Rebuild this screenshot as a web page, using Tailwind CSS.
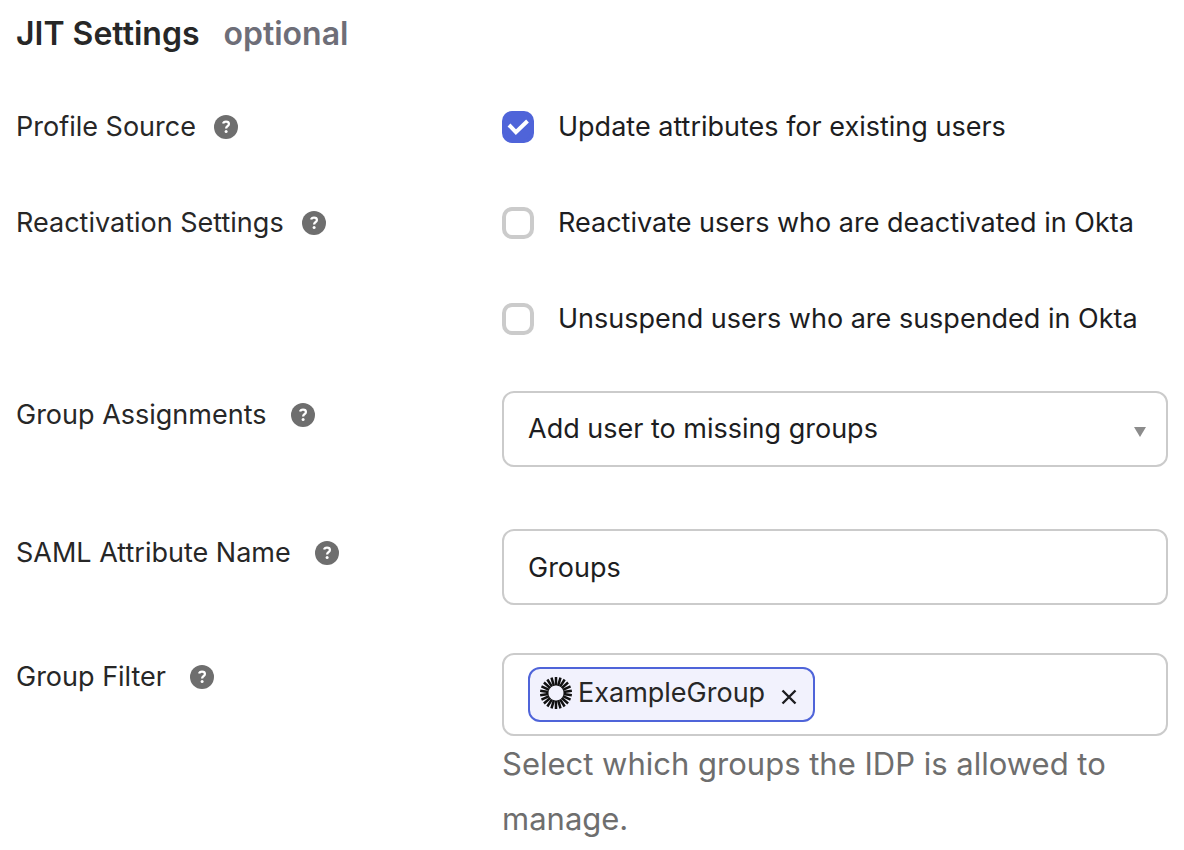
<!DOCTYPE html>
<html lang="en">
<head>
<meta charset="utf-8">
<meta name="viewport" content="width=device-width, initial-scale=1">
<title>JIT Settings</title>
<script src="https://cdn.jsdelivr.net/npm/@tailwindcss/browser@4"></script>
</head>
<body class="bg-white font-['Inter',sans-serif] text-[27px] leading-10 text-[#1d1d21]">
<svg class="hidden" aria-hidden="true">
  <symbol id="help" viewBox="0 0 24 24">
    <circle cx="12" cy="12" r="12" fill="#6e6e6e"/>
    <path d="M9.1 8.600C9.400 7.200 10.500 6.600 12 6.600c1.800 0 2.900.9 2.900 2.300 0 1.100-.6 1.700-1.500 2.300-.9.6-1.300 1-1.300 2.200" fill="none" stroke="#fff" stroke-width="2.300"/>
    <circle cx="12.100" cy="16.600" r="1.500" fill="#fff"/>
  </symbol>
</svg>
<form class="px-4 pt-3">
  <h1 class="flex gap-6 text-[32px] leading-11 font-semibold text-[#272727]">JIT Settings <span class="text-[#6e6e78]">optional</span></h1>

  <div class="mt-[51px] grid grid-cols-[27fr_37fr]">
    <div class="flex h-10 items-center gap-[18px] text-[#272727]">Profile Source
      <button type="button" aria-label="Help: Profile Source"><svg class="size-6"><use href="#help"/></svg></button>
    </div>
    <label class="flex h-10 items-center gap-6">
      <span class="relative size-8 shrink-0">
        <input type="checkbox" checked class="peer block size-8 appearance-none rounded-[10px] border-4 border-[#cbcbcb] bg-white checked:border-[#4f64d9] checked:bg-[#4f64d9]">
        <svg class="pointer-events-none absolute inset-0 hidden size-8 peer-checked:block" viewBox="0 0 32 32" fill="none" stroke="#fff" stroke-width="4"><path d="M7 14l6.900 7.100L25.500 10"/></svg>
      </span>
      Update attributes for existing users
    </label>
  </div>

  <div class="mt-14 grid grid-cols-[27fr_37fr]">
    <div class="flex h-10 items-center gap-[18px] text-[#272727]">Reactivation Settings
      <button type="button" aria-label="Help: Reactivation Settings"><svg class="size-6"><use href="#help"/></svg></button>
    </div>
    <div class="flex flex-col gap-14">
      <label class="flex h-10 items-center gap-6">
        <input type="checkbox" class="size-8 shrink-0 appearance-none rounded-[10px] border-4 border-[#cbcbcb] bg-white checked:border-[#4f64d9] checked:bg-[#4f64d9]">
        Reactivate users who are deactivated in Okta
      </label>
      <label class="flex h-10 items-center gap-6">
        <input type="checkbox" class="size-8 shrink-0 appearance-none rounded-[10px] border-4 border-[#cbcbcb] bg-white checked:border-[#4f64d9] checked:bg-[#4f64d9]">
        Unsuspend users who are suspended in Okta
      </label>
    </div>
  </div>

  <div class="mt-[52px] grid grid-cols-[27fr_37fr]">
    <div class="mt-1 flex h-10 items-center gap-6 text-[#272727]"><label for="assign">Group Assignments</label>
      <button type="button" aria-label="Help: Group Assignments"><svg class="size-6"><use href="#help"/></svg></button>
    </div>
    <div class="relative">
      <select id="assign" class="block h-[76px] w-full appearance-none rounded-xl border-2 border-[#cbcbcb] bg-white px-6">
        <option>Add user to missing groups</option>
      </select>
      <svg class="pointer-events-none absolute top-9 right-[22px] h-[10px] w-3" viewBox="0 0 12 10"><path d="M0 0h12L6 10z" fill="#8c8c8c"/></svg>
    </div>
  </div>

  <div class="mt-[62px] grid grid-cols-[27fr_37fr]">
    <div class="mt-1 flex h-10 items-center gap-6 text-[#272727]"><label for="attr">SAML Attribute Name</label>
      <button type="button" aria-label="Help: SAML Attribute Name"><svg class="size-6"><use href="#help"/></svg></button>
    </div>
    <input id="attr" type="text" value="Groups" class="h-[76px] w-full rounded-xl border-2 border-[#cbcbcb] bg-white px-6">
  </div>

  <div class="mt-12 grid grid-cols-[27fr_37fr]">
    <div class="mt-1 flex h-10 items-center gap-6 text-[#272727]"><span id="filter">Group Filter</span>
      <button type="button" aria-label="Help: Group Filter"><svg class="size-6"><use href="#help"/></svg></button>
    </div>
    <div>
      <div role="group" aria-labelledby="filter" class="flex rounded-xl border-2 border-[#cbcbcb] px-6 py-3">
        <span class="flex h-[55px] items-center rounded-xl border-2 border-[#4f64d9] bg-[#f2f2fd] pr-4 pb-[3px] pl-[10px] text-[#272727]">
          <svg class="mr-[6px] size-8" viewBox="-16 -16 32 32" stroke="#111" stroke-width="2.500" stroke-dasharray="8.500 15 8.500" aria-hidden="true">
            <path id="ray" d="M0-16V16"/>
            <use href="#ray" transform="rotate(16.364)"/><use href="#ray" transform="rotate(32.727)"/><use href="#ray" transform="rotate(49.091)"/><use href="#ray" transform="rotate(65.455)"/><use href="#ray" transform="rotate(81.818)"/><use href="#ray" transform="rotate(98.182)"/><use href="#ray" transform="rotate(114.545)"/><use href="#ray" transform="rotate(130.909)"/><use href="#ray" transform="rotate(147.273)"/><use href="#ray" transform="rotate(163.636)"/>
          </svg>
          ExampleGroup
          <button type="button" aria-label="Remove ExampleGroup" class="mt-[7px] ml-4"><svg class="size-4" viewBox="0 0 16 16" fill="none" stroke="#1d1d21" stroke-width="2.400"><path d="M1.500 1.500l13 13M14.500 1.500l-13 13"/></svg></button>
        </span>
      </div>
      <p class="text-[31px] leading-[55px] text-[#6e6e6e]">Select which groups the IDP is allowed to manage.</p>
    </div>
  </div>
</form>
</body>
</html>
